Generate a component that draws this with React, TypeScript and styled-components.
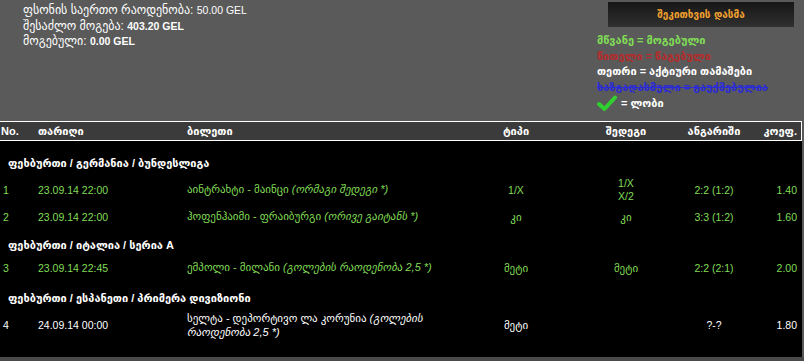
import React from 'react';
import styled, { createGlobalStyle } from 'styled-components';

const GlobalStyle = createGlobalStyle`
  html, body {
    margin: 0;
    padding: 0;
    background: #4a4a4a;
  }
  body {
    font-family: "Liberation Sans", "DejaVu Sans", sans-serif;
    font-size: 11px;
    color: #fff;
  }
`;

const GREEN = '#80dd55';

type Bet = {
  no: number;
  date: string;
  match: string;
  note: string;
  type: string;
  result: string[];
  score: string;
  coef: string;
  active?: boolean;
};

type Group = { title: string; h: number; pt: number; bets: (Bet & { h: number })[] };

const groups: Group[] = [
  {
    title: 'ფეხბურთი / გერმანია / ბუნდესლიგა',
    h: 36,
    pt: 8,
    bets: [
      {
        no: 1,
        date: '23.09.14 22:00',
        match: 'აინტრახტი - მაინცი',
        note: '(ორმაგი შედეგი *)',
        type: '1/X',
        result: ['1/X', 'X/2'],
        score: '2:2 (1:2)',
        coef: '1.40',
        h: 25,
      },
      {
        no: 2,
        date: '23.09.14 22:00',
        match: 'ჰოფენჰაიმი - ფრაიბურგი',
        note: '(ორივე გაიტანს *)',
        type: 'კი',
        result: ['კი'],
        score: '3:3 (1:2)',
        coef: '1.60',
        h: 30,
      },
    ],
  },
  {
    title: 'ფეხბურთი / იტალია / სერია A',
    h: 26,
    pt: 0,
    bets: [
      {
        no: 3,
        date: '23.09.14 22:45',
        match: 'ემპოლი - მილანი',
        note: '(გოლების რაოდენობა 2,5 *)',
        type: 'მეტი',
        result: ['მეტი'],
        score: '2:2 (2:1)',
        coef: '2.00',
        h: 20,
      },
    ],
  },
  {
    title: 'ფეხბურთი / ესპანეთი / პრიმერა დივიზიონი',
    h: 34,
    pt: 6,
    bets: [
      {
        no: 4,
        date: '24.09.14 00:00',
        match: 'სელტა - დეპორტივო ლა კორუნია',
        note: '(გოლების რაოდენობა 2,5 *)',
        type: 'მეტი',
        result: [],
        score: '?-?',
        coef: '1.80',
        active: true,
        h: 26,
      },
    ],
  },
];

const isLatin = (s: string) => /^[\x20-\x7e]*$/.test(s);

export default function App() {
  return (
    <>
      <GlobalStyle />
      <Page>
        <Top>
          <Stats>
            <StatLine>
              ფსონის საერთო რაოდენობა: <Amount>50.00 GEL</Amount>
            </StatLine>
            <StatLine>
              შესაძლო მოგება: <Amount $bold>403.20 GEL</Amount>
            </StatLine>
            <StatLine>
              მოგებული: <Amount $bold>0.00 GEL</Amount>
            </StatLine>
          </Stats>
          <Side>
            <AskButton>შეკითხვის დასმა</AskButton>
            <Legend>
              <LegendItem $color={GREEN}>მწვანე = მოგებული</LegendItem>
              <LegendItem $color="#b52b2b">წითელი = წაგებული</LegendItem>
              <LegendItem $color="#ffffff">თეთრი = აქტიური თამაშები</LegendItem>
              <LegendItem $color="#2a2ad6" $strike>
                ხაზგადასმული = გაუქმებულია
              </LegendItem>
              <LegendItem $color="#ffffff">
                <svg width="20" height="17" viewBox="0 0 20 17">
                  <path d="M2 9 L7.5 14 L18 2.5" fill="none" stroke="#2fd12f" strokeWidth="4" strokeLinecap="round" strokeLinejoin="round" />
                </svg>
                = ლობი
              </LegendItem>
            </Legend>
          </Side>
        </Top>

        <Table>
          <HeadRow>
            <Cell>No.</Cell>
            <Cell>თარიღი</Cell>
            <Cell>ბილეთი</Cell>
            <Cell $align="center">ტიპი</Cell>
            <Cell $align="center">შედეგი</Cell>
            <Cell $align="center">ანგარიში</Cell>
            <Cell $align="right">კოეფ.</Cell>
          </HeadRow>
          <Body>
            {groups.map((g) => (
              <React.Fragment key={g.title}>
                <SectionTitle $h={g.h} $pt={g.pt}>
                  {g.title}
                </SectionTitle>
                {g.bets.map((b) => (
                  <BetRow key={b.no} $h={b.h} $active={b.active}>
                    <Cell $num>{b.no}</Cell>
                    <Cell $num>{b.date}</Cell>
                    <Ticket>
                      {b.match} <i>{b.note}</i>
                    </Ticket>
                    <Cell $align="center" $num={isLatin(b.type)}>
                      {b.type}
                    </Cell>
                    <Cell $align="center" $num={b.result.every(isLatin)}>
                      {b.result.map((r) => (
                        <div key={r}>{r}</div>
                      ))}
                    </Cell>
                    <Cell $align="center" $num>
                      {b.score}
                    </Cell>
                    <Cell $align="right" $num>
                      {b.coef}
                    </Cell>
                  </BetRow>
                ))}
              </React.Fragment>
            ))}
          </Body>
        </Table>
      </Page>
    </>
  );
}

const Page = styled.div`
  width: 804px;
  background: #5a5a5a;
`;

const Top = styled.div`
  height: 121px;
  display: flex;
  justify-content: space-between;
`;

const Stats = styled.div`
  padding: 3px 0 0 23px;
  display: flex;
  flex-direction: column;
`;

const StatLine = styled.div`
  font-size: 12px;
  line-height: 15.5px;
  color: #fff;
  white-space: nowrap;
`;

const Amount = styled.span<{ $bold?: boolean }>`
  font-size: 10.5px;
  font-weight: ${(p) => (p.$bold ? 'bold' : 'normal')};
`;

const Side = styled.div`
  width: 207px;
  padding-top: 2px;
  display: flex;
  flex-direction: column;
`;

const AskButton = styled.button`
  margin-left: 11px;
  width: 186px;
  height: 25px;
  border: none;
  padding: 0;
  background: linear-gradient(#161616, #303030);
  color: #f2a02e;
  font-family: "DejaVu Sans", sans-serif;
  font-size: 10px;
  font-weight: bold;
`;

const Legend = styled.div`
  margin-top: 6px;
  display: flex;
  flex-direction: column;
`;

const LegendItem = styled.div<{ $color: string; $strike?: boolean }>`
  display: flex;
  align-items: center;
  gap: 4px;
  height: 15.6px;
  font-size: 11px;
  font-weight: bold;
  color: ${(p) => p.$color};
  text-decoration: ${(p) => (p.$strike ? 'line-through' : 'none')};
  white-space: nowrap;
`;

const Table = styled.div`
  width: 802px;
  background: #000;
`;

const Columns = styled.div`
  display: grid;
  grid-template-columns: 38px 149px 279px 100px 120px 56px 59px;
  align-items: center;
`;

const HeadRow = styled(Columns)`
  height: 18px;
  background: #3b3b3b;
  border-top: 1px solid #fff;
  border-bottom: 1px solid #fff;
  border-right: 1px solid #fff;
  font-size: 11px;
  font-weight: bold;
  color: #fff;

  & > div:first-child {
    padding-left: 1px;
  }
`;

const Cell = styled.div<{ $align?: 'left' | 'center' | 'right'; $num?: boolean }>`
  text-align: ${(p) => p.$align ?? 'left'};
  font-size: ${(p) => (p.$num ? '10.5px' : '11px')};
  white-space: nowrap;
  line-height: 13px;

  &:last-child {
    padding-right: 4px;
  }
`;

const Body = styled.div`
  padding-bottom: 19px;
`;

const SectionTitle = styled.div<{ $h: number; $pt: number }>`
  height: ${(p) => p.$h}px;
  padding: ${(p) => p.$pt}px 0 0 8px;
  box-sizing: border-box;
  display: flex;
  align-items: center;
  font-size: 11px;
  font-weight: bold;
  color: #fff;
`;

const BetRow = styled(Columns)<{ $h: number; $active?: boolean }>`
  height: ${(p) => p.$h}px;
  font-size: 11px;
  color: ${(p) => (p.$active ? '#fff' : GREEN)};

  & > div:first-child {
    padding-left: 3px;
  }
`;

const Ticket = styled.div`
  line-height: 13.5px;
  white-space: normal;
  padding-right: 28px;
`;
